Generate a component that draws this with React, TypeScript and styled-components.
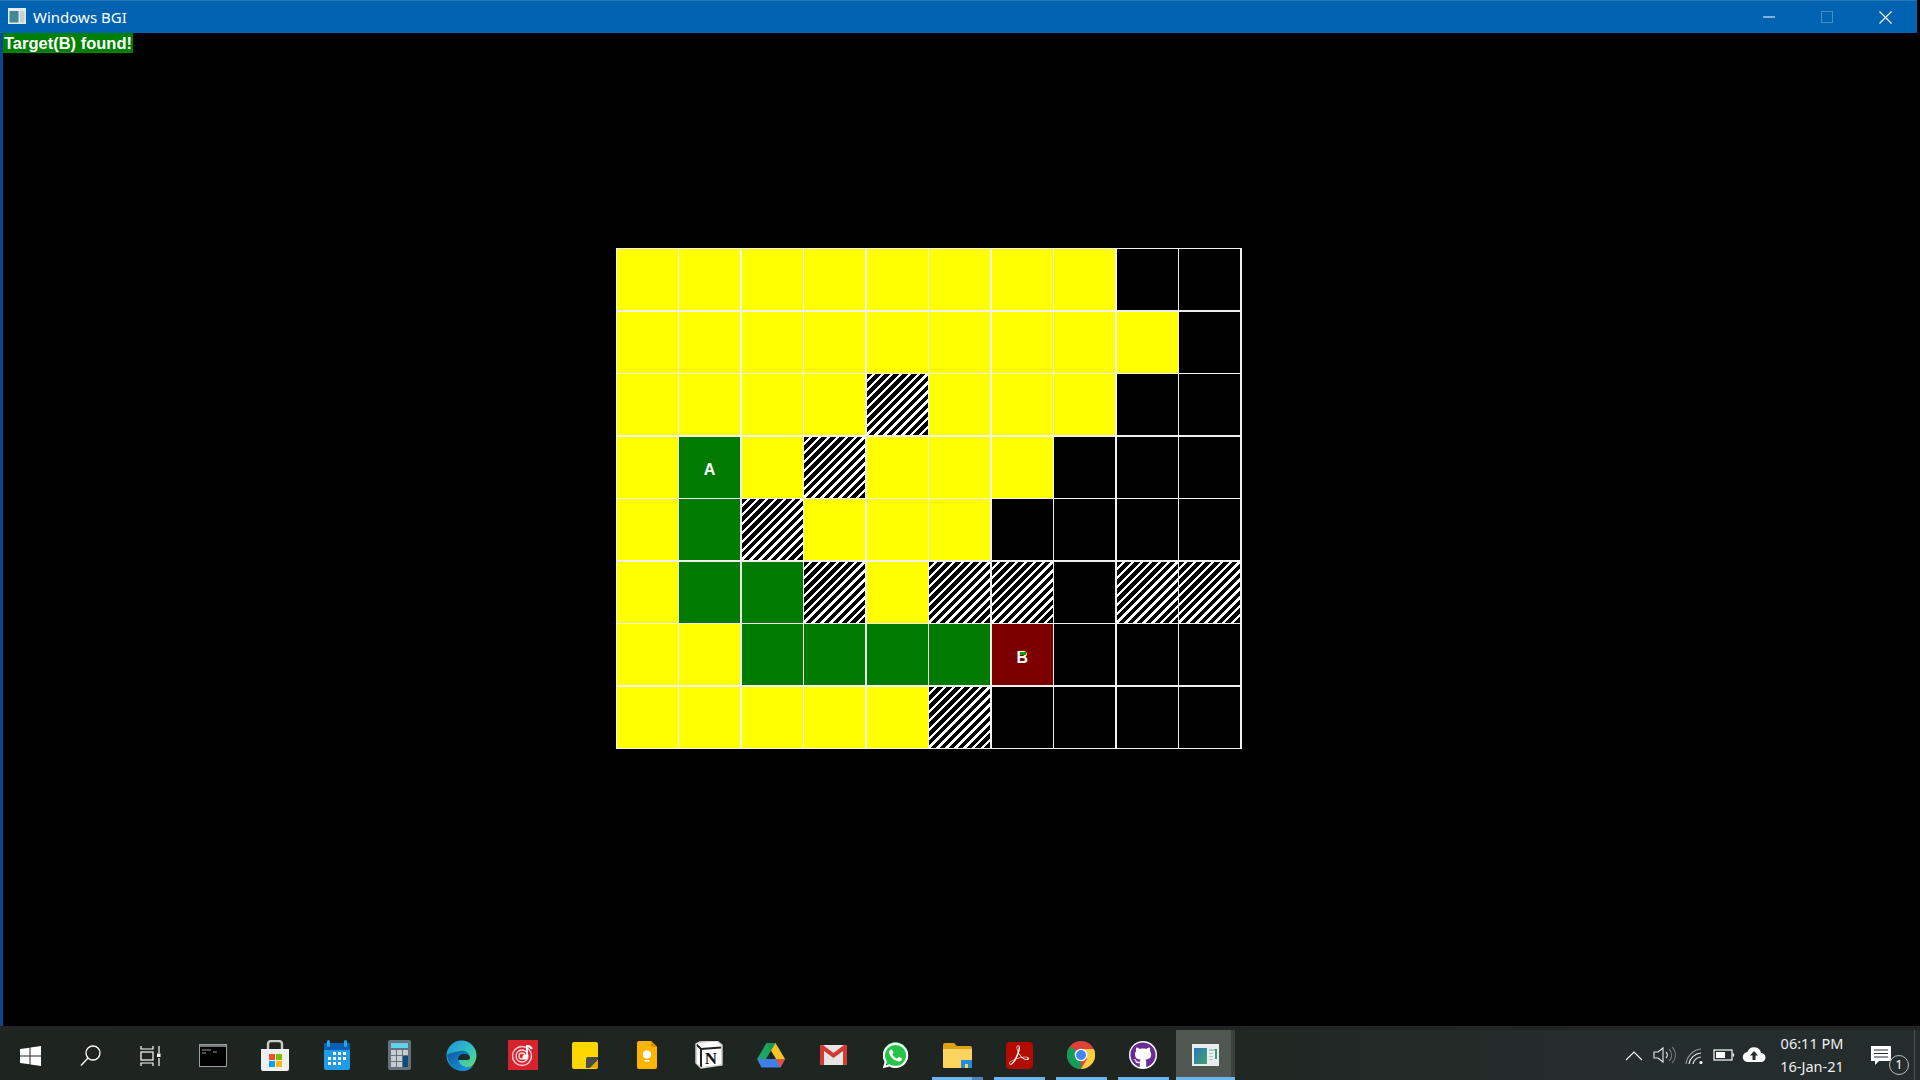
import React from "react";
import styled, { createGlobalStyle } from "styled-components";
import { FaWhatsapp, FaGithub } from "react-icons/fa";
import { SiAdobeacrobatreader } from "react-icons/si";

const Global = createGlobalStyle`
  html, body { margin: 0; padding: 0; background: #000; overflow: hidden; }
  #root { width: 1920px; height: 1080px; }
`;

const Screen = styled.div`
  width: 1920px;
  height: 1080px;
  display: flex;
  flex-direction: column;
  background: #000;
  font-family: "Noto Sans", "Open Sans", sans-serif;
`;

const TitleBar = styled.header`
  height: 33px;
  flex: none;
  margin-right: 3px;
  padding-right: 3px;
  display: flex;
  align-items: center;
  background: #0063b1;
  border-top: 1px solid #2a76b5;
  box-sizing: border-box;
  color: #fff;
`;

const TitleIcon = styled.svg`
  width: 18px;
  height: 16px;
  margin: 0 7px 2px 8px;
  flex: none;
`;

const TitleText = styled.span`
  font-size: 15px;
  line-height: 20px;
  flex: 1;
`;

const WindowButton = styled.span`
  width: 58px;
  height: 32px;
  display: flex;
  align-items: center;
  justify-content: center;
`;

const Workspace = styled.main`
  flex: 1;
  min-height: 0;
  display: flex;
  flex-direction: column;
  border-left: 3px solid #084a8a;
  background: #000;
`;

const Status = styled.div`
  align-self: flex-start;
  height: 20px;
  padding: 0 1px 0 1px;
  background: #008000;
  color: #fff;
  font: bold 16.5px/20px "Liberation Sans", Arial, sans-serif;
  white-space: nowrap;
`;

const Board = styled.div`
  margin: 195px 0 0 612.5px;
  width: 626px;
  height: 501px;
  box-sizing: border-box;
  padding: 1px;
  display: grid;
  grid-template-columns: repeat(10, 1fr);
  grid-template-rows: repeat(8, 1fr);
  column-gap: 1.5px;
  row-gap: 1.2px;
  background: #f0f0f0;
`;

type Kind = "Y" | "K" | "H" | "G" | "A" | "B";

const cellBackground: Record<Kind, string> = {
  Y: "#ffff00",
  K: "#000",
  G: "#007b00",
  A: "#007b00",
  B: "#7c0000",
  H: "repeating-linear-gradient(135deg, #000 0, #000 3.9px, #fff 3.9px, #fff 6.3px)",
};

const Cell = styled.div<{ $kind: Kind }>`
  position: relative;
  display: flex;
  align-items: center;
  justify-content: center;
  background: ${(p) => cellBackground[p.$kind]};
  color: #fff;
  font: bold 16px/16px "Liberation Sans", Arial, sans-serif;
`;

const CellLabel = styled.span`
  position: relative;
  top: 3px;
`;

const Counter = styled.span`
  position: absolute;
  left: 28px;
  top: 28px;
  width: 6px;
  height: 3px;
  background: #00a000;
  z-index: 1;
`;

const Taskbar = styled.footer`
  height: 54px;
  flex: none;
  display: flex;
  align-items: stretch;
  box-sizing: border-box;
  border-top: 4px solid #232323;
  background: linear-gradient(90deg, #1e2420 0%, #1f2520 60%, #262d2d 85%, #252c2c 100%);
  color: #fff;
`;

const SystemGroup = styled.div`
  display: flex;
  flex: none;
  margin-right: 2px;
`;

const SystemButton = styled.div`
  width: 60px;
  flex: none;
  display: flex;
  align-items: center;
  justify-content: center;
  padding-top: 1px;
`;

const AppButton = styled.div<{ $running?: boolean; $active?: boolean; $stacked?: boolean }>`
  position: relative;
  width: 62px;
  flex: none;
  display: flex;
  align-items: center;
  justify-content: center;
  background: ${(p) =>
    p.$active
      ? "linear-gradient(90deg, transparent 2px, #505650 2px, #505650 57px, #3c423d 57px, #3c423d 61px, transparent 61px)"
      : "transparent"};
  &::after {
    content: "";
    display: ${(p) => (p.$running ? "block" : "none")};
    position: absolute;
    left: ${(p) => (p.$active ? "2px" : "6px")};
    right: ${(p) => (p.$active ? "1px" : "5px")};
    bottom: 0;
    height: 3px;
    background: ${(p) =>
      p.$stacked ? "linear-gradient(90deg, #6db3ee 40px, #4a86bd 40px)" : "#6db3ee"};
  }
`;

const Tray = styled.div`
  margin-left: auto;
  padding-right: 5px;
  display: flex;
  align-items: center;
  color: #fff;
`;

const TrayIcon = styled.svg`
  flex: none;
  display: block;
  width: 24px;
  height: 24px;
  margin-right: 6px;
`;

const Clock = styled.div`
  width: 70px;
  margin-left: 5px;
  text-align: center;
  font-size: 14.5px;
  line-height: 23px;
  color: #f0f0f0;
  white-space: nowrap;
`;

const Notify = styled.div`
  position: relative;
  width: 68px;
  height: 50px;
  display: flex;
  align-items: center;
  justify-content: center;
  border-right: 1px solid #4a5050;
  box-sizing: border-box;
`;

const NotifyBadge = styled.span`
  position: absolute;
  left: 42px;
  top: 25px;
  width: 20px;
  height: 20px;
  border-radius: 50%;
  border: 1.5px solid #bbb;
  background: #262d2d;
  box-sizing: border-box;
  font-size: 13px;
  line-height: 17px;
  text-align: center;
  color: #fff;
`;

const WhatsappDisc = styled.div`
  display: flex;
  width: 29px;
  height: 29px;
  color: #fff;
  background: radial-gradient(circle at 50% 48%, #25c348 0, #25c348 12.5px, transparent 13px);
`;

const AcrobatTile = styled.div`
  width: 27px;
  height: 27px;
  border-radius: 4px;
  background: #b30b00;
  display: flex;
  align-items: center;
  justify-content: center;
  color: #fff;
`;

const GithubDisc = styled.div`
  width: 28px;
  height: 28px;
  border-radius: 50%;
  background: #fff;
  color: #6a2c91;
  display: flex;
  align-items: center;
  justify-content: center;
`;

const BgiIcon = ({ w = 27, h = 22 }: { w?: number; h?: number }) => (
  <svg width={w} height={h} viewBox="0 0 27 22">
    <defs>
      <linearGradient id="bgiG" x1="0" y1="0" x2="1" y2="1">
        <stop offset="0" stopColor="#2a78b8" />
        <stop offset="1" stopColor="#45a070" />
      </linearGradient>
    </defs>
    <rect width="27" height="22" fill="#e9eef0" />
    <rect x="2" y="4" width="13" height="16" fill="url(#bgiG)" />
    <path d="M17 5h7v2h-7zM17 9h4v1h-4zM17 12h4v1h-4zM17 15h4v1h-4z" fill="#b8c4c8" />
    <rect x="23" y="5" width="2" height="10" fill="#3c9a70" />
  </svg>
);

const ChromeIcon = () => (
  <svg width="28" height="28" viewBox="0 0 28 28">
    <circle cx="14" cy="14" r="14" fill="#db4437" />
    <path d="M14 14L1.900 21A14 14 0 0 1 3 5.300z" fill="#0f9d58" />
    <path d="M1.900 21L9 14l5 0 0 14A14 14 0 0 1 1.900 21z" fill="#0f9d58" />
    <path d="M14 8h12.800A14 14 0 0 1 14 28l6-10z" fill="#ffcd40" />
    <circle cx="14" cy="14" r="6.300" fill="#fff" />
    <circle cx="14" cy="14" r="5" fill="#4285f4" />
  </svg>
);

const icons: Record<string, React.ReactNode> = {
  cmd: (
    <svg width="28" height="23" viewBox="0 0 28 23">
      <rect x="0.5" y="0.5" width="27" height="22" fill="#000" stroke="#9a9fa3" />
      <rect x="1" y="1" width="26" height="2" fill="#777" />
      <path d="M3 6h9M14 8h4M3 9h4" stroke="#9a9a9a" strokeWidth="1" />
    </svg>
  ),
  store: (
    <svg width="30" height="31" viewBox="0 0 30 31">
      <path d="M8 9V4a3 3 0 0 1 3-3h8a3 3 0 0 1 3 3v5" fill="none" stroke="#c9c9c9" strokeWidth="2.4" />
      <path d="M1 9h28v20a2 2 0 0 1-2 2H3a2 2 0 0 1-2-2z" fill="#f0f0f0" />
      <rect x="9" y="14" width="6" height="6" fill="#f25022" />
      <rect x="16" y="14" width="6" height="6" fill="#7fba00" />
      <rect x="9" y="21" width="6" height="6" fill="#00a4ef" />
      <rect x="16" y="21" width="6" height="6" fill="#ffb900" />
    </svg>
  ),
  calendar: (
    <svg width="27" height="30" viewBox="0 0 27 30">
      <rect y="3" width="26" height="27" rx="2" fill="#1f9be8" />
      <path d="M0 5a2 2 0 0 1 2-2h22a2 2 0 0 1 2 2v5H0z" fill="#0b5fb0" />
      <rect x="3" y="0" width="3" height="7" rx="1.5" fill="#2ba5ee" />
      <rect x="20" y="0" width="3" height="7" rx="1.5" fill="#2ba5ee" />
      <path d="M9 12h3v3H9zM14 12h3v3h-3zM19 12h3v3h-3zM4 17h3v3H4zM9 17h3v3H9zM14 17h3v3h-3zM19 17h3v3h-3zM4 22h3v3H4zM9 22h3v3H9zM14 22h3v3h-3z" fill="#fff" />
    </svg>
  ),
  calc: (
    <svg width="23" height="30" viewBox="0 0 23 30">
      <rect width="23" height="30" rx="2" fill="#66727c" />
      <rect x="3" y="3" width="17" height="5" fill="#5fd0ee" />
      <path d="M3 10h5v5H3zM9 10h5v5H9zM15 10h5v5h-5zM3 16h5v5H3zM9 16h5v5H9zM3 22h5v5H3zM9 22h5v5H9z" fill="#c6ccd2" />
      <rect x="15" y="16" width="5" height="11" fill="#10497f" />
    </svg>
  ),
  edge: (
    <svg width="31" height="31" viewBox="0 0 31 31">
      <defs>
        <linearGradient id="edgeA" x1="0" y1="0" x2="1" y2="1">
          <stop offset="0" stopColor="#1a90d8" />
          <stop offset="0.55" stopColor="#33c3c0" />
          <stop offset="1" stopColor="#72dd5a" />
        </linearGradient>
        <linearGradient id="edgeB" x1="0" y1="0" x2="1" y2="1">
          <stop offset="0" stopColor="#0c59a4" />
          <stop offset="1" stopColor="#1b9de2" />
        </linearGradient>
      </defs>
      <circle cx="15.5" cy="15.5" r="15" fill="url(#edgeA)" />
      <path d="M1 15C2 26 10 31 16 31c5 0 9-2 11-5-5 2-12 1-14-4-1-3 1-7 5-7 3 0 5 1 6 3 0-6-6-8-10-7C8 12 3 13 1 15z" fill="url(#edgeB)" />
      <path d="M12 20c0-4 3-6 6-6 4 0 6 2 6 4 0 1-1 2-3 2h-7z" fill="#1c2420" opacity="0.95" />
    </svg>
  ),
  wynk: (
    <svg width="30" height="30" viewBox="0 0 30 30">
      <rect width="30" height="30" fill="#d8232e" />
      <g fill="none" stroke="#f6d2d4" strokeWidth="1.4">
        <circle cx="14" cy="16" r="3" />
        <circle cx="14" cy="16" r="6" />
        <circle cx="14" cy="16" r="9.5" />
      </g>
      <path d="M19 17V6c2 0 4 1 5 3" fill="none" stroke="#fff" strokeWidth="1.8" />
      <circle cx="17" cy="17" r="2.6" fill="#fff" />
    </svg>
  ),
  sticky: (
    <svg width="26" height="27" viewBox="0 0 26 27">
      <rect width="26" height="27" rx="2" fill="#fdd600" />
      <path d="M14 26v-9a2 2 0 0 1 2-2h10v3l-8 8z" fill="#4a4a48" />
      <path d="M18 26l8-8v6a2 2 0 0 1-2 2z" fill="#e0a800" />
    </svg>
  ),
  keep: (
    <svg width="20" height="28" viewBox="0 0 20 28">
      <path d="M2 0h12l6 6v20a2 2 0 0 1-2 2H2a2 2 0 0 1-2-2V2a2 2 0 0 1 2-2z" fill="#fbb400" />
      <path d="M14 0l6 6h-6z" fill="#e98f00" />
      <circle cx="10" cy="13.5" r="4.2" fill="#fff" />
      <rect x="7.5" y="19" width="5" height="1.6" fill="#fff" />
    </svg>
  ),
  notion: (
    <svg width="28" height="28" viewBox="0 0 28 28">
      <path d="M5 1l17-1 5 4v20l-21 3-5-5V3z" fill="#fff" stroke="#111" strokeWidth="0.5" />
      <path d="M1.500 3.500L6 8l20-1.500M6 8v18" fill="none" stroke="#222" strokeWidth="2" />
      <path d="M5 1l17-1 5 4v20l-21 3-5-5V3z" fill="none" stroke="#d8d8d8" strokeWidth="1.400" />
      <text x="16" y="23" textAnchor="middle" fontFamily="Liberation Serif, serif" fontWeight="bold" fontSize="17" fill="#111">N</text>
    </svg>
  ),
  drive: (
    <svg width="28" height="25" viewBox="0 0 28 25">
      <path d="M9.500 0h9l9.500 16h-9z" fill="#f7c325" />
      <path d="M9.500 0h9L9 16H0z" fill="#1fa463" />
      <path d="M0 16h19l9 0-4.500 8.500h-19z" fill="#3f7fe6" />
      <path d="M19 16h9l-4.500 8.500z" fill="#e2513f" />
      <path d="M9.500 0L14 7.600 18.500 0z" fill="#118a4a" opacity="0.5" />
    </svg>
  ),
  gmail: (
    <svg width="27" height="20" viewBox="0 0 27 20">
      <rect width="27" height="20" rx="2" fill="#e7e5e3" />
      <path d="M0 2a2 2 0 0 1 2-2h1l10.500 8L24 0h1a2 2 0 0 1 2 2v16a2 2 0 0 1-2 2h-2V6l-9.500 7L4 6v14H2a2 2 0 0 1-2-2z" fill="#cf3a33" />
    </svg>
  ),
  explorer: (
    <svg width="29" height="25" viewBox="0 0 29 25">
      <path d="M0 2a2 2 0 0 1 2-2h9l3 3h13a2 2 0 0 1 2 2v4H0z" fill="#dea118" />
      <rect y="6" width="29" height="19" rx="1" fill="#fbd460" />
      <path d="M18 25v-8h11v8h-4v-4h-3v4z" fill="#2b8ad8" />
    </svg>
  ),
};

const rows = ["YYYYYYYYKK", "YYYYYYYYYK", "YYYYHYYYKK", "YAYHYYYKKK", "YGHYYYKKKK", "YGGHYHHKHH", "YYGGGGBKKK", "YYYYYHKKKK"];

const apps: { key: string; node: React.ReactNode; running?: boolean; active?: boolean; stacked?: boolean }[] = [
  { key: "cmd", node: icons.cmd },
  { key: "store", node: icons.store },
  { key: "calendar", node: icons.calendar },
  { key: "calc", node: icons.calc },
  { key: "edge", node: icons.edge },
  { key: "wynk", node: icons.wynk },
  { key: "sticky", node: icons.sticky },
  { key: "keep", node: icons.keep },
  { key: "notion", node: icons.notion },
  { key: "drive", node: icons.drive },
  { key: "gmail", node: icons.gmail },
  { key: "whatsapp", node: <WhatsappDisc><FaWhatsapp size={29} /></WhatsappDisc> },
  { key: "explorer", node: icons.explorer, running: true, stacked: true },
  { key: "acrobat", node: <AcrobatTile><SiAdobeacrobatreader size={20} /></AcrobatTile>, running: true },
  { key: "chrome", node: <ChromeIcon />, running: true },
  { key: "github", node: <GithubDisc><FaGithub size={26} /></GithubDisc>, running: true },
  { key: "bgi", node: <BgiIcon />, running: true, active: true },
];

export default function App() {
  return (
    <Screen>
      <Global />
      <TitleBar>
        <TitleIcon viewBox="0 0 18 16">
          <rect width="18" height="16" fill="#e4eaee" />
          <rect x="1.500" y="3" width="9" height="11.500" fill="#3f8a96" />
          <rect x="12" y="3" width="4.500" height="11.500" fill="#c8d0d4" />
        </TitleIcon>
        <TitleText>Windows BGI</TitleText>
        <WindowButton>
          <svg width="12" height="12" viewBox="0 0 12 12"><path d="M0 6h12" stroke="#fff" strokeWidth="1" /></svg>
        </WindowButton>
        <WindowButton>
          <svg width="12" height="12" viewBox="0 0 12 12"><rect x="0.500" y="0.500" width="11" height="11" fill="none" stroke="#4a8bc4" /></svg>
        </WindowButton>
        <WindowButton>
          <svg width="13" height="13" viewBox="0 0 13 13"><path d="M0.500 0.500l12 12M12.500 0.500l-12 12" stroke="#fff" strokeWidth="1.100" /></svg>
        </WindowButton>
      </TitleBar>
      <Workspace>
        <Status>Target(B) found!</Status>
        <Board>
          {rows.flatMap((row, r) =>
            row.split("").map((c, i) => (
              <Cell key={`${r}-${i}`} $kind={c as Kind}>
                {c === "B" && <Counter />}
                {(c === "A" || c === "B") && <CellLabel>{c}</CellLabel>}
              </Cell>
            ))
          )}
        </Board>
      </Workspace>
      <Taskbar>
        <SystemGroup>
          <SystemButton>
            <svg width="21" height="20" viewBox="0 0 21 20" fill="#fff">
              <path d="M0 3l9.500-1.300V9.500H0zM10.500 1.500L21 0v9.500H10.500zM0 10.500h9.500v7.800L0 17zM10.500 10.500H21V20l-10.500-1.500z" />
            </svg>
          </SystemButton>
          <SystemButton>
            <svg width="21" height="21" viewBox="0 0 21 21" fill="none" stroke="#fff" strokeWidth="1.300">
              <circle cx="13" cy="8" r="7" />
              <path d="M8 13L1 20.500" />
            </svg>
          </SystemButton>
          <SystemButton>
            <svg width="21" height="20" viewBox="0 0 21 20" fill="none" stroke="#fff" strokeWidth="1.200">
              <path d="M1 0v3h12V0M1 20v-3h12v3" />
              <rect x="1" y="6" width="12" height="8" />
              <path d="M19 0v7M19 12v8" />
              <rect x="17" y="7.500" width="3.500" height="3.500" fill="#fff" stroke="none" />
            </svg>
          </SystemButton>
        </SystemGroup>
        {apps.map((a) => (
          <AppButton key={a.key} $running={a.running} $active={a.active} $stacked={a.stacked}>
            {a.node}
          </AppButton>
        ))}
        <Tray>
          <TrayIcon viewBox="0 0 24 24" fill="none" stroke="#fff" strokeWidth="1.200">
            <path d="M4 17l8-8 8 8" />
          </TrayIcon>
          <TrayIcon viewBox="0 0 24 24" fill="none" stroke="#e8e8e8" strokeWidth="1.100">
            <path d="M2 9h4l5-4v14l-5-4H2z" />
            <path d="M14 9a4 4 0 0 1 0 6" />
            <path d="M17 6a8 8 0 0 1 0 12M20 4a11 11 0 0 1 0 16" stroke="#777" />
          </TrayIcon>
          <TrayIcon viewBox="0 0 24 24" fill="none" stroke="#e8e8e8" strokeWidth="1.200">
            <path d="M4 21a17 17 0 0 1 15-15" stroke="#999" />
            <path d="M7 21a13 13 0 0 1 12-11" />
            <path d="M11 21a9 9 0 0 1 8-7" />
            <circle cx="19" cy="19.500" r="1.600" fill="#fff" stroke="none" />
          </TrayIcon>
          <TrayIcon viewBox="0 0 24 24" fill="none" stroke="#fff" strokeWidth="1.200">
            <rect x="2" y="7" width="18" height="10" />
            <rect x="4" y="9" width="9" height="6" fill="#fff" stroke="none" />
            <path d="M21.500 10.500v3" />
          </TrayIcon>
          <TrayIcon viewBox="0 0 24 24">
            <path d="M6 19a5 5 0 0 1-.5-10A7 7 0 0 1 19 10a4.500 4.500 0 0 1 0 9z" fill="#fff" />
            <path d="M12 8l-4 4.500h2.500V17h3v-4.500H16z" fill="#262d2d" />
          </TrayIcon>
          <Clock>
            <div>06:11 PM</div>
            <div>16-Jan-21</div>
          </Clock>
          <Notify>
            <svg width="20" height="19" viewBox="0 0 20 19">
              <path d="M0 0h20v15H8l-4 4v-4H0z" fill="#fff" />
              <path d="M3 4h14M3 7.500h14M3 11h14" stroke="#262d2d" strokeWidth="1" />
            </svg>
            <NotifyBadge>1</NotifyBadge>
          </Notify>
        </Tray>
      </Taskbar>
    </Screen>
  );
}
